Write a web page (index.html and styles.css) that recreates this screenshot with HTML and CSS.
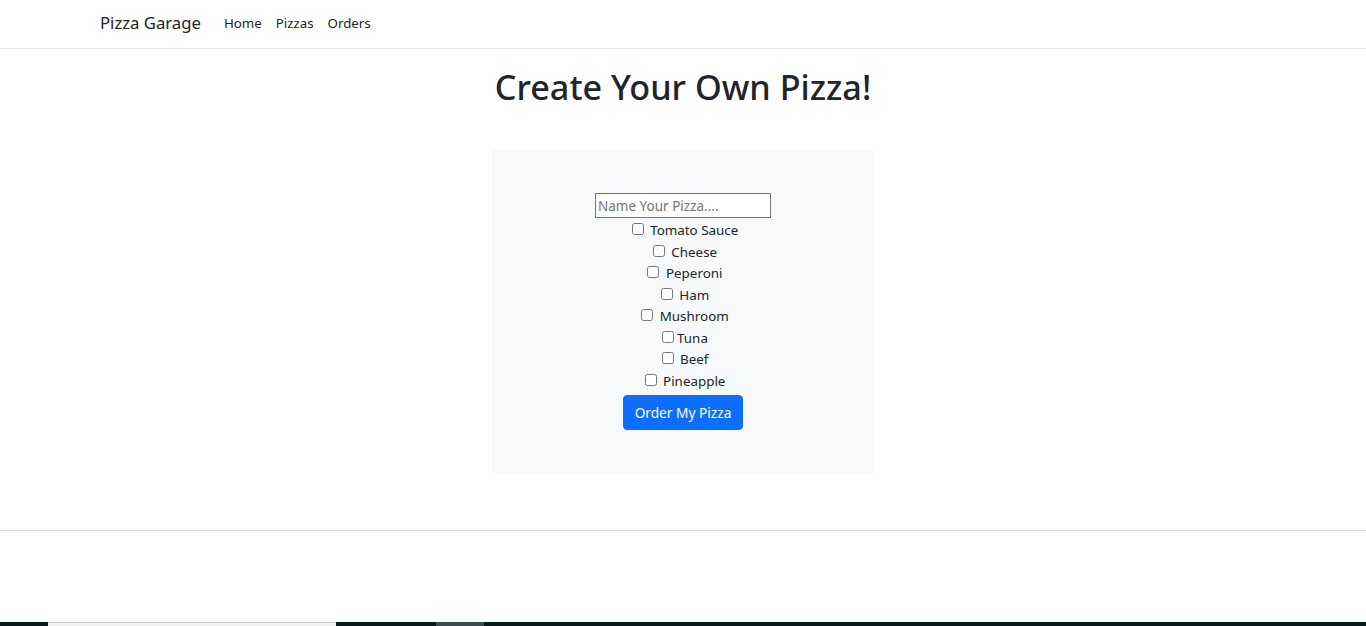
FILE: index.html
```html
<!DOCTYPE html>
<html lang="en">
<head>
<meta charset="utf-8">
<title>Pizza Garage</title>
<link rel="stylesheet" href="styles.css">
</head>
<body>
<header class="navbar">
  <div class="nav-inner">
    <a class="brand" href="#">Pizza Garage</a>
    <nav class="nav-links">
      <a class="nav-link" href="#">Home</a>
      <a class="nav-link" href="#">Pizzas</a>
      <a class="nav-link" href="#">Orders</a>
    </nav>
  </div>
</header>
<main class="main">
  <h1 class="title">Create Your Own Pizza!</h1>
  <form class="pizza-box">
    <input class="name-input" type="text" placeholder="Name Your Pizza....">
    <div class="options">
      <label class="opt"><input type="checkbox"> Tomato Sauce</label>
      <label class="opt"><input type="checkbox"> Cheese</label>
      <label class="opt"><input type="checkbox"> Peperoni</label>
      <label class="opt"><input type="checkbox"> Ham</label>
      <label class="opt"><input type="checkbox"> Mushroom</label>
      <label class="opt"><input type="checkbox">Tuna</label>
      <label class="opt"><input type="checkbox"> Beef</label>
      <label class="opt"><input type="checkbox"> Pineapple</label>
    </div>
    <button class="btn-order" type="button">Order My Pizza</button>
  </form>
</main>
<footer class="footer"></footer>
<div class="strip">
  <span class="seg dark s1"></span>
  <span class="seg light s2"></span>
  <span class="seg dark s3"></span>
  <span class="seg grey s4"></span>
  <span class="seg dark s5"></span>
</div>
</body>
</html>
```
FILE: styles.css
```css
* { box-sizing: border-box; }
html, body { margin: 0; padding: 0; }
body {
  font-family: "Noto Sans", "Open Sans", sans-serif;
  font-size: 14px;
  line-height: 1.5;
  color: #212529;
  background: #fff;
  height: 626px;
  display: flex;
  flex-direction: column;
  overflow: hidden;
}
a { text-decoration: none; color: inherit; }

.navbar {
  height: 49px;
  border-bottom: 1px solid #dee2e6;
  flex: none;
}
.nav-inner {
  height: 47px;
  padding-left: 100px;
  display: flex;
  align-items: center;
}
.brand {
  font-size: 16.7px;
  color: #212529;
  margin-right: 16px;
  line-height: 1;
}
.nav-links { display: flex; }
.nav-link {
  padding: 0 7px;
  font-size: 13.3px;
  color: #212529;
}

.main {
  flex: none;
  display: flex;
  flex-direction: column;
  align-items: center;
}
.title {
  margin: 17px 0 0;
  font-size: 34.2px;
  line-height: 42px;
  font-weight: 500;
}
.pizza-box {
  margin-top: 42px;
  width: 382px;
  height: 323px;
  background: #f8f9fa;
  padding: 43px 0 0;
  display: flex;
  flex-direction: column;
  align-items: center;
}
.name-input {
  width: 176px;
  height: 25px;
  border: 1px solid #767676;
  padding: 1px 2px;
  font: inherit;
  font-size: 13.5px;
  color: #212529;
  background: #fff;
  border-radius: 0;
  margin: 0 0 2px;
}
.name-input::placeholder { color: #757575; }
.options {
  display: flex;
  flex-direction: column;
  align-items: center;
  font-size: 13.4px;
}
.opt {
  height: 21.5px;
  line-height: 21.5px;
  white-space: pre;
}
.opt input {
  margin: 0 3px 0 4px;
  width: 12px;
  height: 12px;
  vertical-align: 0;
}
.btn-order {
  margin-top: 3px;
  width: 120px;
  height: 35px;
  background: #0d6efd;
  color: #fff;
  border: 1px solid #0d6efd;
  border-radius: 4px;
  font: inherit;
  font-size: 13.7px;
  padding: 1px 0 0;
}

.footer {
  margin-top: 57px;
  border-top: 1px solid #dee2e6;
  flex: 1;
}
.strip {
  flex: none;
  height: 4px;
  display: flex;
}
.seg { display: block; height: 4px; }
.dark { background: #061a20; }
.light { background: #f0f0f0; border-top: 1px solid #c8c8c8; }
.grey { background: #3a4a50; }
.s1 { width: 48px; }
.s2 { width: 288px; }
.s3 { width: 100px; }
.s4 { width: 48px; }
.s5 { flex: 1; }
```
